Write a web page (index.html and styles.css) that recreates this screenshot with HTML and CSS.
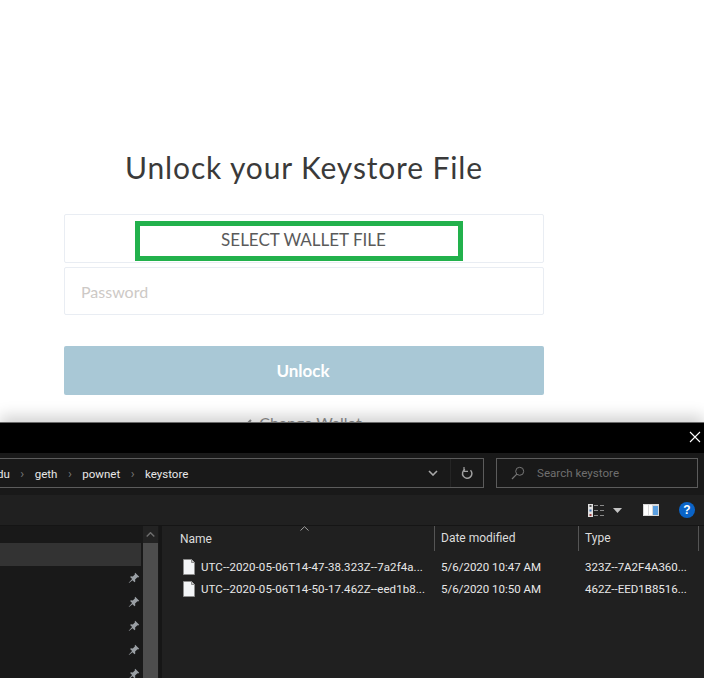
FILE: index.html
```html
<!DOCTYPE html>
<html lang="en">
<head>
<meta charset="utf-8">
<title>Unlock your Keystore File</title>
<link rel="stylesheet" href="styles.css">
</head>
<body>
<main class="page">
  <h1 class="title">Unlock your Keystore File</h1>
  <div class="field file-field"><button class="select-file">SELECT WALLET FILE</button></div>
  <div class="field password-field"><span class="placeholder">Password</span></div>
  <button class="unlock">Unlock</button>
  <a class="change"><svg class="arrow" width="10" height="10" viewBox="0 0 10 10"><path d="M5 1L1 5l4 4M1 5h9" stroke="#8f8f8f" stroke-width="2" fill="none"/></svg>Change Wallet</a>
</main>
<section class="dialog">
  <div class="titlebar">
    <svg class="close" width="12" height="12" viewBox="0 0 12 12"><path d="M1 1l10 10M11 1L1 11" stroke="#fff" stroke-width="1.1" fill="none"/></svg>
  </div>
  <div class="addressbar">
    <div class="address">
      <div class="crumbs">
        <span>du</span><i>&rsaquo;</i><span>geth</span><i>&rsaquo;</i><span>pownet</span><i>&rsaquo;</i><span>keystore</span>
      </div>
      <svg class="chev" width="10" height="6" viewBox="0 0 10 6"><path d="M1 1l4 4 4-4" stroke="#a8a8a8" stroke-width="1.6" fill="none"/></svg>
      <div class="refresh">
        <svg width="12" height="14" viewBox="0 0 12 14"><path d="M9.5 4.2A4.7 4.7 0 1 1 4 3.4" stroke="#a0a0a0" stroke-width="1.5" fill="none"/><path d="M3 1v4.4h4" stroke="#a0a0a0" stroke-width="1.2" fill="none"/></svg>
      </div>
    </div>
    <div class="search">
      <svg width="14" height="14" viewBox="0 0 14 14"><circle cx="8.7" cy="5.3" r="4" stroke="#777" fill="none"/><path d="M5.8 8.2L1 13" stroke="#777" stroke-width="1.2"/></svg>
      <span>Search keystore</span>
    </div>
  </div>
  <div class="toolbar">
    <svg width="16" height="13" viewBox="0 0 16 13">
      <rect x="0" y="0" width="5" height="13" fill="#e0e0e0"/>
      <rect x="1.500" y="1" width="2" height="2" fill="#555"/><rect x="1.500" y="5.500" width="2" height="2" fill="#3a6fb0"/><rect x="1.500" y="10" width="2" height="2" fill="#a04040"/>
      <path d="M6 1.500h4M12 1.500h4M6 6.500h4M12 6.500h4M6 11.500h4M12 11.500h4" stroke="#8a8a8a"/>
    </svg>
    <svg class="drop" width="9" height="5" viewBox="0 0 9 5"><path d="M0 0h9L4.500 5z" fill="#c4c4c4"/></svg>
    <svg class="pane-icon" width="16" height="12" viewBox="0 0 16 12">
      <rect width="16" height="12" fill="#d8d8d8"/><rect x="1" y="1" width="4" height="10" fill="#fff"/><rect x="6" y="1" width="3" height="10" fill="#fff"/><rect x="10" y="2" width="5" height="9" fill="#5a9fe0"/>
    </svg>
    <svg class="help" width="16" height="16" viewBox="0 0 16 16"><circle cx="8" cy="8" r="8" fill="#0a64c8"/><text x="8" y="12.300" text-anchor="middle" class="help-mark">?</text></svg>
  </div>
  <div class="body">
    <aside class="nav">
      <div class="nav-list">
        <div class="nav-top"></div>
        <div class="nav-row selected"></div>
        <div class="nav-row"><svg class="pin" viewBox="0 0 12 12"><use href="#pin"/></svg></div>
        <div class="nav-row"><svg class="pin" viewBox="0 0 12 12"><use href="#pin"/></svg></div>
        <div class="nav-row"><svg class="pin" viewBox="0 0 12 12"><use href="#pin"/></svg></div>
        <div class="nav-row"><svg class="pin" viewBox="0 0 12 12"><use href="#pin"/></svg></div>
        <div class="nav-row"><svg class="pin" viewBox="0 0 12 12"><use href="#pin"/></svg></div>
      </div>
      <div class="scrollbar">
        <div class="scroll-up"><svg width="9" height="5" viewBox="0 0 9 5"><path d="M.7 4.500l3.800-3.800 3.800 3.800" stroke="#6e6e6e" stroke-width="1.400" fill="none"/></svg></div>
        <div class="scroll-thumb"></div>
      </div>
    </aside>
    <div class="files">
      <svg class="sort" width="9" height="5" viewBox="0 0 9 5"><path d="M.5 4.500L4.500 .7l4 3.800" stroke="#a0a0a0" fill="none"/></svg>
      <div class="cols head">
        <div class="c-name">Name</div>
        <div class="c-date">Date modified</div>
        <div class="c-type">Type</div>
      </div>
      <div class="cols row first">
        <div class="c-name"><svg class="doc" viewBox="0 0 12 16"><use href="#doc"/></svg><span>UTC--2020-05-06T14-47-38.323Z--7a2f4a...</span></div>
        <div class="c-date">5/6/2020 10:47 AM</div>
        <div class="c-type">323Z--7A2F4A360...</div>
      </div>
      <div class="cols row">
        <div class="c-name"><svg class="doc" viewBox="0 0 12 16"><use href="#doc"/></svg><span>UTC--2020-05-06T14-50-17.462Z--eed1b8...</span></div>
        <div class="c-date">5/6/2020 10:50 AM</div>
        <div class="c-type">462Z--EED1B8516...</div>
      </div>
    </div>
  </div>
</section>
<svg class="defs" width="0" height="0">
  <defs>
    <g id="pin"><path d="M7.200.8l4 4-1 .8-.8-.3-2.300 2.300.2 1.900-.8.800-2-2L1 11l-.3-.3 3.400-3.600-2-2 .8-.8 1.900.2L7 2.200l-.3-.8z" fill="#9a9fa4"/></g>
    <g id="doc"><path d="M.5.500h8l3 3v12H.5z" fill="#f3f5f7" stroke="#8d8d8d"/><path d="M8.500.500v3h3" fill="#c8c8c8" stroke="#8d8d8d"/></g>
  </defs>
</svg>
</body>
</html>
```
FILE: styles.css
```css
* { box-sizing: border-box; }
html, body { margin: 0; height: 100%; }
body {
  position: relative;
  height: 678px;
  overflow: hidden;
  background: #fff;
  font-family: Lato, "Open Sans", sans-serif;
}
.page {
  width: 480px;
  margin-left: 64px;
  padding-top: 148px;
  display: flex;
  flex-direction: column;
  align-items: stretch;
}
.title {
  margin: 0 0 27px;
  height: 39px;
  line-height: 39px;
  font-size: 30px;
  font-weight: 400;
  letter-spacing: .85px;
  text-align: center;
  color: #3a3a3a;
}
.field {
  border: 1px solid #e9edf3;
  border-radius: 2px;
  background: #fff;
}
.file-field {
  height: 49px;
  margin-bottom: 4px;
  display: flex;
  justify-content: center;
  padding-top: 6px;
  padding-right: 9px;
}
.select-file {
  width: 328px;
  height: 40px;
  margin-left: -1px;
  border: 5px solid #22b14c;
  background: #fff;
  font: 400 17px/22px Lato, sans-serif;
  color: #5a5a5a;
  padding: 0 0 3px 9px;
}
.password-field {
  height: 48px;
  padding: 0 16px;
  display: flex;
  align-items: center;
}
.placeholder { font-size: 16px; color: #cdc9c6; }
.unlock {
  margin-top: 31px;
  height: 49px;
  border: 0;
  border-radius: 2px;
  background: #a9c8d6;
  color: #fff;
  font: 700 17px Lato, sans-serif;
  padding: 0 2px 0 0;
}
.change {
  margin-top: 18px;
  text-align: center;
  font-size: 16px;
  color: #8f8f8f;
  line-height: 20px;
}
.arrow { margin-right: 3px; }

.dialog {
  position: absolute;
  left: 0;
  right: 0;
  top: 422px;
  bottom: 0;
  display: flex;
  flex-direction: column;
  background: #202020;
  box-shadow: 0 -6px 14px rgba(0, 0, 0, .18);
  border-top: 1px solid #6a6a6a;
  font-family: Roboto, "Open Sans", sans-serif;
  font-size: 12px;
  color: #e8e8e8;
}
.titlebar {
  height: 30px;
  flex: none;
  background: #000;
  display: flex;
  justify-content: flex-end;
  align-items: center;
  padding-right: 3px;
}
.close { margin-bottom: 2px; }
.addressbar {
  height: 42px;
  flex: none;
  background: #191919;
  display: flex;
  gap: 12px;
  padding-top: 5px;
}
.address, .search {
  height: 30px;
  border: 1px solid #5c5c5c;
  display: flex;
  align-items: center;
}
.address { width: 485px; margin-left: -1px; border-left: 0; }
.crumbs { display: flex; align-items: center; flex: 1; gap: 10.500px; margin-left: -2px; padding-top: 1px; font-size: 11.500px; }
.crumbs i { font-style: normal; color: #777; font-size: 13px; }
.chev { margin-right: 12px; }
.refresh {
  width: 33px;
  height: 100%;
  border-left: 1px solid #252525;
  display: flex;
  align-items: center;
  justify-content: center;
}
.search {
  width: 202px;
  padding-left: 14px;
  gap: 12px;
  color: #6f6f6f;
  font-size: 11.600px;
}
.toolbar {
  height: 31px;
  flex: none;
  background: #202020;
  border-bottom: 1px solid #151515;
  display: flex;
  align-items: center;
  justify-content: flex-end;
  padding: 0 9px 0 0;
}
.drop { margin-left: 9px; }
.pane-icon { margin-left: 21px; }
.help { margin-left: 20px; }
.help-mark { font: 700 12px "Liberation Sans", sans-serif; fill: #fff; }
.body { flex: 1; display: flex; min-height: 0; }
.nav {
  width: 162px;
  flex: none;
  display: flex;
  background: #191919;
  border-right: 3px solid #161616;
  overflow: hidden;
}
.nav-list { width: 143px; flex: none; }
.nav-top { height: 17px; }
.nav-row {
  height: 24px;
  display: flex;
  align-items: center;
  justify-content: flex-end;
  padding-right: 3px;
}
.nav-row.selected { height: 23px; background: #333; margin-right: 2px; margin-bottom: -1px; }
.pin { width: 12px; height: 12px; }
.nav-row:nth-child(3) { margin-top: 1px; }
.scrollbar { width: 15px; flex: none; background: #232323; }
.scroll-up { height: 17px; display: flex; align-items: center; justify-content: center; }
.scroll-thumb { height: 200px; background: #4d4d4d; }
.files { flex: 1; position: relative; background: #202020; }
.sort { position: absolute; left: 138px; top: 0; }
.cols { display: flex; }
.c-name { width: 272px; padding-left: 18px; display: flex; align-items: center; white-space: nowrap; }
.c-date { width: 144px; padding-left: 6px; white-space: nowrap; }
.c-type { width: 121px; padding-left: 6px; white-space: nowrap; }
.head { height: 25px; align-items: center; color: #dcdcdc; }
.head .c-date, .head .c-type { border-left: 1px solid #555; height: 25px; line-height: 25px; }
.head .c-type { border-right: 1px solid #555; }
.row { height: 22px; align-items: center; font-size: 11.500px; }
.row .c-name span { letter-spacing: .08px; }
.row .c-date, .row .c-type { padding-left: 7px; }
.row.first { margin-top: 5px; }
.doc { width: 12px; height: 16px; margin: 0 6px 0 3px; flex: none; }
.defs { position: absolute; }
```
